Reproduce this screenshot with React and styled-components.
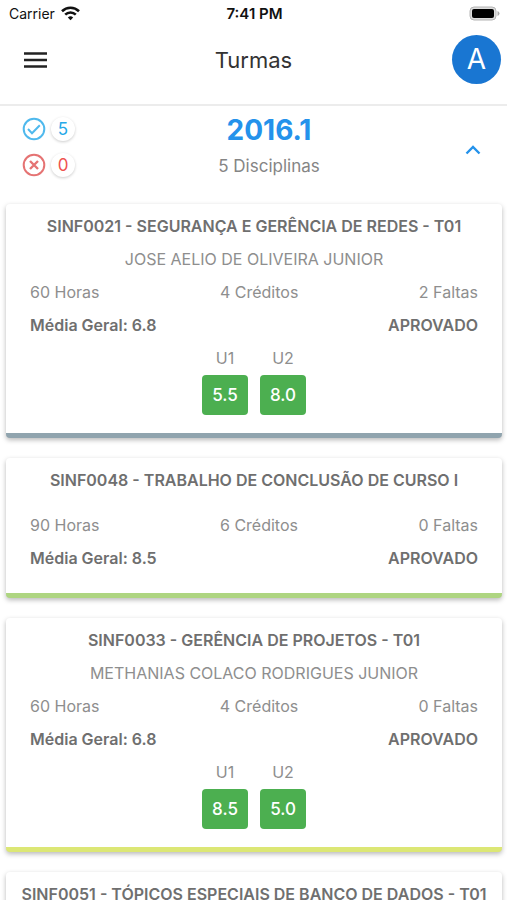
import React, { useState } from "react";
import styled, { createGlobalStyle } from "styled-components";

const GlobalStyle = createGlobalStyle`
  * { box-sizing: border-box; }
  body {
    margin: 0;
    background: #fff;
    color: #8e8e8e;
    font-family: Inter, "Liberation Sans", sans-serif;
    font-size: 16px;
  }
  h1, h2, h3, p, dl, dt, dd { margin: 0; font: inherit; }
  button { border: 0; padding: 0; background: none; font: inherit; color: inherit; cursor: pointer; }
`;

const Screen = styled.div`
  display: flex;
  flex-direction: column;
  height: 100vh;
`;

const StatusBar = styled.div`
  display: grid;
  grid-template-columns: 1fr auto 1fr;
  align-items: center;
  flex: none;
  height: 27px;
  padding: 0 7px 0 9px;
  color: #111;
  font-size: 14px;
`;

const Carrier = styled.div`
  display: flex;
  align-items: center;
  gap: 6px;
`;

const Clock = styled.div`
  font-size: 15px;
  font-weight: 600;
`;

const Battery = styled.svg`
  justify-self: end;
`;

const TopBar = styled.header`
  display: grid;
  grid-template-columns: 1fr auto 1fr;
  align-items: center;
  flex: none;
  height: 79px;
  padding: 0 6px 12px;
  border-bottom: 2px solid #ececec;
`;

const MenuButton = styled.button`
  display: flex;
  justify-self: start;
  padding: 8px 18px;
`;

const PageTitle = styled.h1`
  color: #333;
  font-size: 22px;
  line-height: 28px;
`;

const Avatar = styled.button`
  justify-self: end;
  width: 49px;
  height: 49px;
  border-radius: 50%;
  background: #1976d2;
  color: #fff;
  font-size: 28px;
  line-height: 49px;
`;

const Content = styled.main`
  flex: 1;
  min-height: 0;
  overflow-y: auto;
  scrollbar-width: none;
`;

const Term = styled.section`
  display: flex;
  justify-content: space-between;
  height: 98px;
  padding: 6px 24px 0 22px;
`;

const Counts = styled.div`
  display: flex;
  flex-direction: column;
  gap: 12px;
  padding-top: 5px;
`;

const Count = styled.div`
  display: flex;
  align-items: center;
  gap: 5px;
  height: 24px;
  color: ${(p) => p.$color};
`;

const Bubble = styled.span`
  width: 24px;
  height: 24px;
  border-radius: 50%;
  box-shadow: 0 1px 3px rgba(0, 0, 0, 0.2);
  color: ${(p) => p.$color};
  font-size: 17px;
  line-height: 24px;
  text-align: center;
`;

const TermHeading = styled.div`
  text-align: center;
`;

const TermName = styled.h2`
  color: #2492eb;
  font-size: 28px;
  font-weight: 700;
  line-height: 36px;
`;

const TermTotal = styled.p`
  color: #858585;
  font-size: 17px;
  line-height: 36px;
`;

const ToggleButton = styled.button`
  display: flex;
  align-self: start;
  padding-top: 28px;
`;

const Courses = styled.div`
  display: grid;
  gap: 20px;
  padding: 0 5px 20px 6px;
`;

const Card = styled.article`
  padding: 6px 24px 18px;
  border-bottom: 5px solid ${(p) => p.$accent};
  border-radius: 4px;
  background: #fff;
  box-shadow: 0 2px 5px rgba(0, 0, 0, 0.28);
  line-height: 33px;
`;

const CourseName = styled.h3`
  margin: 0 -16px;
  color: #6f6f6f;
  font-weight: 600;
  text-align: center;
  white-space: nowrap;
`;

const Teacher = styled.p`
  min-height: 12px;
  text-align: center;
`;

const Facts = styled.div`
  display: flex;
  justify-content: space-between;
`;

const Result = styled.div`
  display: flex;
  justify-content: space-between;
  color: #6f6f6f;
  font-weight: 600;
`;

const Grades = styled.dl`
  display: flex;
  justify-content: center;
  gap: 12px;
`;

const Grade = styled.div`
  width: 46px;
  text-align: center;
`;

const Score = styled.dd`
  height: 40px;
  border-radius: 4px;
  background: #4caf50;
  color: #fff;
  font-size: 17px;
  font-weight: 500;
  line-height: 40px;
`;

const courses = [
  {
    name: "SINF0021 - SEGURANÇA E GERÊNCIA DE REDES - T01",
    teacher: "JOSE AELIO DE OLIVEIRA JUNIOR",
    facts: ["60 Horas", "4 Créditos", "2 Faltas"],
    average: "6.8",
    grades: ["5.5", "8.0"],
    accent: "#90a4ae",
  },
  {
    name: "SINF0048 - TRABALHO DE CONCLUSÃO DE CURSO I",
    facts: ["90 Horas", "6 Créditos", "0 Faltas"],
    average: "8.5",
    grades: [],
    accent: "#aed581",
  },
  {
    name: "SINF0033 - GERÊNCIA DE PROJETOS - T01",
    teacher: "METHANIAS COLACO RODRIGUES JUNIOR",
    facts: ["60 Horas", "4 Créditos", "0 Faltas"],
    average: "6.8",
    grades: ["8.5", "5.0"],
    accent: "#dce775",
  },
  { name: "SINF0051 - TÓPICOS ESPECIAIS DE BANCO DE DADOS - T01", accent: "#90a4ae" },
];

function Course({ name, teacher, facts, average, grades, accent }) {
  return (
    <Card $accent={accent}>
      <CourseName>{name}</CourseName>
      {facts && (
        <>
          <Teacher>{teacher}</Teacher>
          <Facts>
            {facts.map((fact) => <span key={fact}>{fact}</span>)}
          </Facts>
          <Result>
            <span>Média Geral: {average}</span>
            <span>APROVADO</span>
          </Result>
          {grades.length > 0 && (
            <Grades>
              {grades.map((grade, i) => (
                <Grade key={i}>
                  <dt>U{i + 1}</dt>
                  <Score>{grade}</Score>
                </Grade>
              ))}
            </Grades>
          )}
        </>
      )}
    </Card>
  );
}

export default function App() {
  const [open, setOpen] = useState(true);
  return (
    <>
      <GlobalStyle />
      <Screen>
        <StatusBar>
          <Carrier>
            Carrier
            <svg width="19" height="15" viewBox="0 0 19 15" fill="none" stroke="#111" strokeWidth="2.6" aria-hidden="true">
              <path d="M1 5.2a12.2 12.2 0 0 1 17 0" />
              <path d="M4.2 8.6a7.6 7.6 0 0 1 10.6 0" />
              <path d="M6.8 11.5a3.9 3.9 0 0 1 5.4 0L9.5 14.3Z" fill="#111" stroke="none" />
            </svg>
          </Carrier>
          <Clock>7:41 PM</Clock>
          <Battery width="31" height="15" viewBox="0 0 31 15" aria-hidden="true">
            <rect x="1" y="1" width="26" height="13" rx="4" fill="#ddd" stroke="#b4b4b4" />
            <rect x="3" y="3" width="22" height="9" rx="2" fill="#000" />
            <path d="M28.5 5v5q2-.7 2-2.500t-2-2.500Z" fill="#aaa" />
          </Battery>
        </StatusBar>

        <TopBar>
          <MenuButton aria-label="Menu">
            <svg width="23" height="16" viewBox="0 0 23 16" stroke="#222" strokeWidth="2.500" aria-hidden="true">
              <path d="M0 1.500h23M0 8h23M0 14.500h23" />
            </svg>
          </MenuButton>
          <PageTitle>Turmas</PageTitle>
          <Avatar>A</Avatar>
        </TopBar>

        <Content>
          <Term>
            <Counts>
              <Count $color="#4fb9ed">
                <svg width="24" height="24" viewBox="0 0 24 24" fill="none" stroke="currentColor" strokeWidth="2" aria-hidden="true">
                  <circle cx="12" cy="12" r="10.300" />
                  <path d="m6 12 4 4.200 7.800-8" />
                </svg>
                <Bubble $color="#26a9e8">5</Bubble>
              </Count>
              <Count $color="#e57373">
                <svg width="24" height="24" viewBox="0 0 24 24" fill="none" stroke="currentColor" strokeWidth="2" aria-hidden="true">
                  <circle cx="12" cy="12" r="10.300" />
                  <path d="m8 8 8 8M16 8l-8 8" strokeWidth="2.400" />
                </svg>
                <Bubble $color="#ef5350">0</Bubble>
              </Count>
            </Counts>
            <TermHeading>
              <TermName>2016.1</TermName>
              <TermTotal>5 Disciplinas</TermTotal>
            </TermHeading>
            <ToggleButton aria-label="Disciplinas" aria-expanded={open} onClick={() => setOpen(!open)}>
              <svg width="20" height="20" viewBox="0 0 20 20" fill="none" stroke="#2492eb" strokeWidth="2.400" aria-hidden="true">
                <path d={open ? "m3.500 13.500 6.500-6.500 6.500 6.500" : "m3.500 6.500 6.500 6.500 6.500-6.500"} />
              </svg>
            </ToggleButton>
          </Term>
          {open && (
            <Courses>
              {courses.map((course) => <Course key={course.name} {...course} />)}
            </Courses>
          )}
        </Content>
      </Screen>
    </>
  );
}
